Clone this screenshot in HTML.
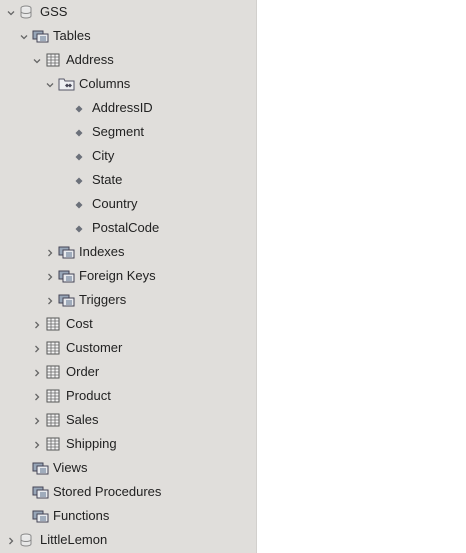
<!DOCTYPE html>
<html><head><style>
body{margin:0;width:466px;height:553px;background:#fff;font-family:"Liberation Sans",sans-serif;overflow:hidden;position:relative}
#sb{position:absolute;left:0;top:0;width:256px;height:553px;background:#e0dedb;border-right:1px solid #d2d0cd}
.r{position:absolute;height:24px;line-height:24px;font-size:13px;color:#222;white-space:nowrap}
.t{position:absolute;top:0}
svg{position:absolute}
</style></head><body><div id="sb">
<svg width="0" height="0" style="position:absolute">
<defs>
<symbol id="dn" viewBox="0 0 10 10"><path d="M2 3.5 L5 6.5 L8 3.5" fill="none" stroke="#666" stroke-width="1.3"/></symbol>
<symbol id="rt" viewBox="0 0 10 10"><path d="M3.5 2 L6.5 5 L3.5 8" fill="none" stroke="#666" stroke-width="1.3"/></symbol>
<symbol id="db" viewBox="0 0 12 14"><ellipse cx="6" cy="3" rx="5" ry="2" fill="#eee" stroke="#888"/><path d="M1 3v8c0 1.1 2.2 2 5 2s5-.9 5-2V3" fill="#e8e8e8" stroke="#888"/><path d="M1 6.5c0 1.1 2.2 2 5 2s5-.9 5-2M1 9.5" fill="none" stroke="#888"/></symbol>
<symbol id="tb" viewBox="0 0 14 14"><rect x="1" y="1" width="12" height="12" fill="#f4f4f4" stroke="#555"/><path d="M1 4h12M1 7h12M1 10h12M5 1v12M9 1v12" stroke="#666" stroke-width=".8"/></symbol>
<symbol id="fd" viewBox="0 0 17 14"><rect x="1" y="2" width="10" height="8" fill="#98a6b8" stroke="#445"/><rect x="5" y="5" width="11" height="8" fill="#e8eaee" stroke="#445"/><rect x="8" y="7" width="6" height="5" fill="#a0acbc"/></symbol>
<symbol id="col" viewBox="0 0 17 14"><path d="M1 2h5l1 2h9v9H1z" fill="#eef0f3" stroke="#556"/><path d="M7 8.5l2-2 2 2-2 2z M10 8.5l2-2 2 2-2 2z" fill="#445"/></symbol>
</defs></svg>

<div class="r" style="top:0;left:0;width:256px"><svg style="left:6px;top:8px" width="10" height="10"><use href="#dn"/></svg><svg style="left:20px;top:5px" width="12" height="14"><use href="#db"/></svg><span class="t" style="left:40px">GSS</span></div>
<div class="r" style="top:24px;left:0"><svg style="left:19px;top:8px" width="10" height="10"><use href="#dn"/></svg><svg style="left:32px;top:5px" width="17" height="14"><use href="#fd"/></svg><span class="t" style="left:53px">Tables</span></div>
<div class="r" style="top:48px;left:0"><svg style="left:32px;top:8px" width="10" height="10"><use href="#dn"/></svg><svg style="left:46px;top:5px" width="14" height="14"><use href="#tb"/></svg><span class="t" style="left:66px">Address</span></div>
<div class="r" style="top:72px;left:0"><svg style="left:45px;top:8px" width="10" height="10"><use href="#dn"/></svg><svg style="left:58px;top:5px" width="17" height="14"><use href="#col"/></svg><span class="t" style="left:79px">Columns</span></div>

<div class="r" style="top:96px;left:0"><svg style="left:75px;top:9px" width="8" height="8"><path d="M4 0.5L7.5 4 4 7.5 0.5 4z" fill="#6c717a"/></svg><span class="t" style="left:92px">AddressID</span></div>
<div class="r" style="top:120px;left:0"><svg style="left:75px;top:9px" width="8" height="8"><path d="M4 0.5L7.5 4 4 7.5 0.5 4z" fill="#6c717a"/></svg><span class="t" style="left:92px">Segment</span></div>
<div class="r" style="top:144px;left:0"><svg style="left:75px;top:9px" width="8" height="8"><path d="M4 0.5L7.5 4 4 7.5 0.5 4z" fill="#6c717a"/></svg><span class="t" style="left:92px">City</span></div>
<div class="r" style="top:168px;left:0"><svg style="left:75px;top:9px" width="8" height="8"><path d="M4 0.5L7.5 4 4 7.5 0.5 4z" fill="#6c717a"/></svg><span class="t" style="left:92px">State</span></div>
<div class="r" style="top:192px;left:0"><svg style="left:75px;top:9px" width="8" height="8"><path d="M4 0.5L7.5 4 4 7.5 0.5 4z" fill="#6c717a"/></svg><span class="t" style="left:92px">Country</span></div>
<div class="r" style="top:216px;left:0"><svg style="left:75px;top:9px" width="8" height="8"><path d="M4 0.5L7.5 4 4 7.5 0.5 4z" fill="#6c717a"/></svg><span class="t" style="left:92px">PostalCode</span></div>

<div class="r" style="top:240px;left:0"><svg style="left:45px;top:8px" width="10" height="10"><use href="#rt"/></svg><svg style="left:58px;top:5px" width="17" height="14"><use href="#fd"/></svg><span class="t" style="left:79px">Indexes</span></div>
<div class="r" style="top:264px;left:0"><svg style="left:45px;top:8px" width="10" height="10"><use href="#rt"/></svg><svg style="left:58px;top:5px" width="17" height="14"><use href="#fd"/></svg><span class="t" style="left:79px">Foreign Keys</span></div>
<div class="r" style="top:288px;left:0"><svg style="left:45px;top:8px" width="10" height="10"><use href="#rt"/></svg><svg style="left:58px;top:5px" width="17" height="14"><use href="#fd"/></svg><span class="t" style="left:79px">Triggers</span></div>

<div class="r" style="top:312px;left:0"><svg style="left:32px;top:8px" width="10" height="10"><use href="#rt"/></svg><svg style="left:46px;top:5px" width="14" height="14"><use href="#tb"/></svg><span class="t" style="left:66px">Cost</span></div>
<div class="r" style="top:336px;left:0"><svg style="left:32px;top:8px" width="10" height="10"><use href="#rt"/></svg><svg style="left:46px;top:5px" width="14" height="14"><use href="#tb"/></svg><span class="t" style="left:66px">Customer</span></div>
<div class="r" style="top:360px;left:0"><svg style="left:32px;top:8px" width="10" height="10"><use href="#rt"/></svg><svg style="left:46px;top:5px" width="14" height="14"><use href="#tb"/></svg><span class="t" style="left:66px">Order</span></div>
<div class="r" style="top:384px;left:0"><svg style="left:32px;top:8px" width="10" height="10"><use href="#rt"/></svg><svg style="left:46px;top:5px" width="14" height="14"><use href="#tb"/></svg><span class="t" style="left:66px">Product</span></div>
<div class="r" style="top:408px;left:0"><svg style="left:32px;top:8px" width="10" height="10"><use href="#rt"/></svg><svg style="left:46px;top:5px" width="14" height="14"><use href="#tb"/></svg><span class="t" style="left:66px">Sales</span></div>
<div class="r" style="top:432px;left:0"><svg style="left:32px;top:8px" width="10" height="10"><use href="#rt"/></svg><svg style="left:46px;top:5px" width="14" height="14"><use href="#tb"/></svg><span class="t" style="left:66px">Shipping</span></div>

<div class="r" style="top:456px;left:0"><svg style="left:32px;top:5px" width="17" height="14"><use href="#fd"/></svg><span class="t" style="left:53px">Views</span></div>
<div class="r" style="top:480px;left:0"><svg style="left:32px;top:5px" width="17" height="14"><use href="#fd"/></svg><span class="t" style="left:53px">Stored Procedures</span></div>
<div class="r" style="top:504px;left:0"><svg style="left:32px;top:5px" width="17" height="14"><use href="#fd"/></svg><span class="t" style="left:53px">Functions</span></div>
<div class="r" style="top:528px;left:0"><svg style="left:6px;top:8px" width="10" height="10"><use href="#rt"/></svg><svg style="left:20px;top:5px" width="12" height="14"><use href="#db"/></svg><span class="t" style="left:40px">LittleLemon</span></div>
</div></body></html>
